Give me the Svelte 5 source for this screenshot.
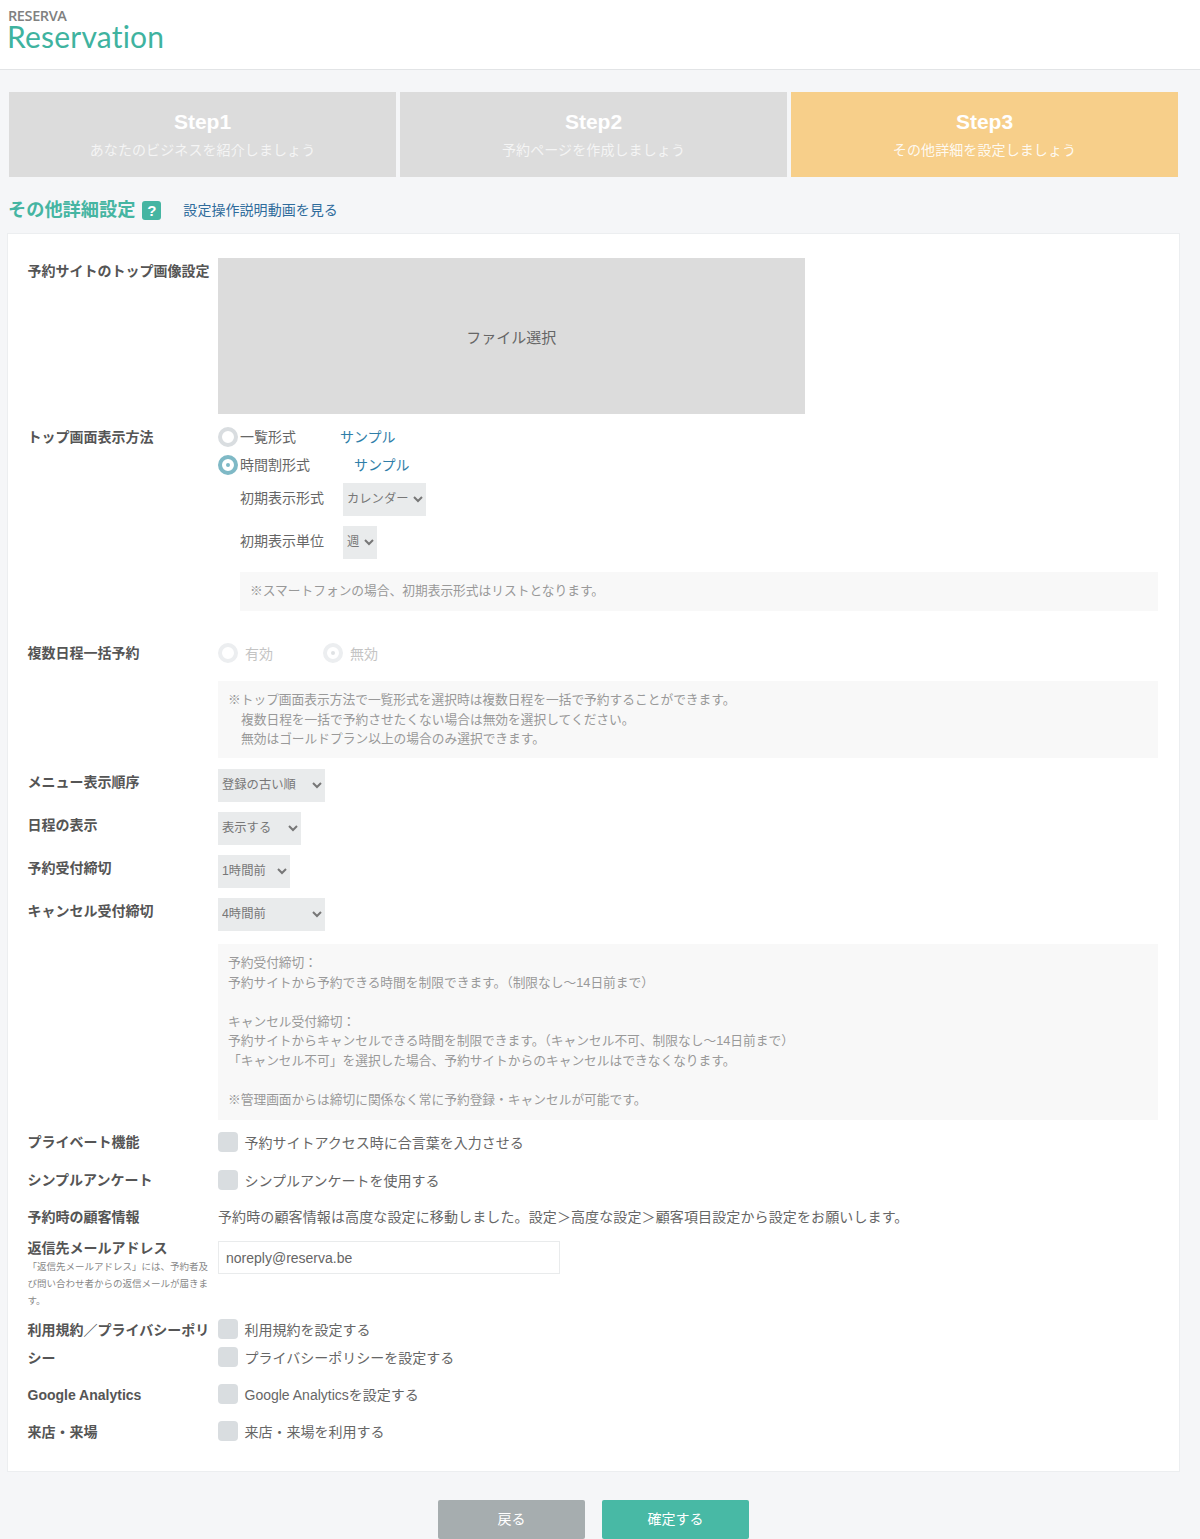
<script>
  const steps = [
    { name: 'Step1', sub: 'あなたのビジネスを紹介しましょう', on: false },
    { name: 'Step2', sub: '予約ページを作成しましょう', on: false },
    { name: 'Step3', sub: 'その他詳細を設定しましょう', on: true }
  ];
  const selects = [
    { label: 'メニュー表示順序', value: '登録の古い順', cls: 'w107' },
    { label: '日程の表示', value: '表示する', cls: 'w82' },
    { label: '予約受付締切', value: '1時間前', cls: 'w72' },
    { label: 'キャンセル受付締切', value: '4時間前', cls: 'w107' }
  ];
</script>

<header class="head">
  <div class="brand">RESERVA</div>
  <div class="logo">Reservation</div>
</header>

<main class="page">
  <div class="steps">
    {#each steps as s}
      <div class="step" class:on={s.on}>
        <div class="step-name">{s.name}</div>
        <div class="step-sub">{s.sub}</div>
      </div>
    {/each}
  </div>

  <div class="title-row">
    <h1>その他詳細設定</h1>
    <span class="help">?</span>
    <a class="video">設定操作説明動画を見る</a>
  </div>

  <section class="card">
    <div class="row r-image">
      <div class="label">予約サイトのトップ画像設定</div>
      <div class="file">ファイル選択</div>
    </div>

    <div class="row r-display">
      <div class="label">トップ画面表示方法</div>
      <div class="body">
        <div class="opt o1"><span class="radio"></span><span class="opt-t w70">一覧形式</span><a class="sample">サンプル</a></div>
        <div class="opt o2"><span class="radio checked"></span><span class="opt-t w84">時間割形式</span><a class="sample">サンプル</a></div>
        <div class="sub-row s1"><span class="sub-l">初期表示形式</span><select class="w83"><option>カレンダー</option></select></div>
        <div class="sub-row s2"><span class="sub-l">初期表示単位</span><select class="w34"><option>週</option></select></div>
        <div class="note n-sm">※スマートフォンの場合、初期表示形式はリストとなります。</div>
      </div>
    </div>

    <div class="row r-multi">
      <div class="label">複数日程一括予約</div>
      <div class="body">
        <div class="dis">
          <span class="radio faded"></span><span class="dis-t">有効</span>
          <span class="radio faded checked-f"></span><span class="dis-t">無効</span>
        </div>
        <div class="note n-md">
          <div class="hang">※トップ画面表示方法で一覧形式を選択時は複数日程を一括で予約することができます。</div>
          <div class="ind">複数日程を一括で予約させたくない場合は無効を選択してください。</div>
          <div class="ind">無効はゴールドプラン以上の場合のみ選択できます。</div>
        </div>
      </div>
    </div>

    {#each selects as s}
      <div class="row r-sel">
        <div class="label">{s.label}</div>
        <select class={s.cls}><option>{s.value}</option></select>
      </div>
    {/each}

    <div class="row r-note">
      <div class="label"></div>
      <div class="note n-lg">
        <div>予約受付締切：</div>
        <div>予約サイトから予約できる時間を制限できます。（制限なし～14日前まで）</div>
        <div class="blank"></div>
        <div>キャンセル受付締切：</div>
        <div>予約サイトからキャンセルできる時間を制限できます。（キャンセル不可、制限なし～14日前まで）</div>
        <div>「キャンセル不可」を選択した場合、予約サイトからのキャンセルはできなくなります。</div>
        <div class="blank"></div>
        <div>※管理画面からは締切に関係なく常に予約登録・キャンセルが可能です。</div>
      </div>
    </div>

    <div class="row r-check first">
      <div class="label">プライベート機能</div>
      <label class="check"><span class="box"></span>予約サイトアクセス時に合言葉を入力させる</label>
    </div>
    <div class="row r-check second">
      <div class="label">シンプルアンケート</div>
      <label class="check"><span class="box"></span>シンプルアンケートを使用する</label>
    </div>
    <div class="row r-info">
      <div class="label">予約時の顧客情報</div>
      <div class="info">予約時の顧客情報は高度な設定に移動しました。設定＞高度な設定＞顧客項目設定から設定をお願いします。</div>
    </div>
    <div class="row r-mail">
      <div class="label">
        <div class="mail-l">返信先メールアドレス</div>
        <small>「返信先メールアドレス」には、予約者及び問い合わせ者からの返信メールが届きます。</small>
      </div>
      <input class="mail" value="noreply@reserva.be" />
    </div>
    <div class="row r-terms">
      <div class="label terms-l">利用規約／プライバシーポリシー</div>
      <div class="terms">
        <label class="check"><span class="box"></span>利用規約を設定する</label>
        <label class="check"><span class="box"></span>プライバシーポリシーを設定する</label>
      </div>
    </div>
    <div class="row r-check">
      <div class="label low">Google Analytics</div>
      <label class="check"><span class="box"></span>Google Analyticsを設定する</label>
    </div>
    <div class="row r-check">
      <div class="label low">来店・来場</div>
      <label class="check"><span class="box"></span>来店・来場を利用する</label>
    </div>
  </section>

  <div class="actions">
    <button class="btn back">戻る</button>
    <button class="btn ok">確定する</button>
  </div>
</main>

<style>
  :global(body) {
    margin: 0;
    background: #f5f6f8;
    font-family: "Liberation Sans", "Noto Sans CJK JP", sans-serif;
    color: #666;
    font-size: 14px;
  }
  .head {
    height: 69px;
    background: #fff;
    border-bottom: 1px solid #e2e4e6;
    padding-left: 8px;
    box-sizing: content-box;
    overflow: hidden;
  }
  .brand {
    font: 600 14.5px/14px "Open Sans", sans-serif;
    color: #808080;
    padding-top: 9px;
    letter-spacing: -0.4px;
  }
  .logo {
    font: 400 30px/26px "Lato", sans-serif;
    color: #3fb39f;
    letter-spacing: 0.2px;
    margin-left: -1px;
  }
  .page { padding: 22px 20px 0 7px; }
  .steps { display: flex; gap: 4px; padding: 0 2px; }
  .step {
    width: 387px;
    height: 85px;
    background: #dcdcdc;
    color: #fff;
    text-align: center;
    box-sizing: border-box;
    padding-top: 16px;
  }
  .step.on { background: #f7cf8a; }
  .step-name { font: 700 21px/28px "Liberation Sans", sans-serif; }
  .step-sub { font-size: 14px; line-height: 20px; margin-top: 4px; letter-spacing: 0.1px; color: rgba(255,255,255,.72); }
  .step.on .step-sub { color: rgba(255,255,255,.9); }

  .title-row { display: flex; align-items: center; height: 56px; padding-top: 10px; box-sizing: border-box; }
  h1 { margin: 0 0 0 1px; font-size: 18.2px; font-weight: 700; color: #45b5a2; line-height: 24px; }
  .help {
    width: 19px; height: 19px; margin-left: 7px;
    background: #45b5a2; color: #fff; border-radius: 3px;
    font: 700 15px/19px "Liberation Sans", sans-serif; text-align: center;
  }
  .video { margin-left: 22px; color: #2f6c9c; font-size: 14px; letter-spacing: 0.05px; margin-top: -2px; }

  .card {
    background: #fff;
    border: 1px solid #eceef0;
    width: 1173px;
    height: 1239px;
    box-sizing: border-box;
    padding: 24px 21px 0 19.5px;
  }
  .row { display: flex; }
  .label {
    width: 190.5px;
    flex: none;
    font-weight: 700;
    color: #555;
    line-height: 20px;
  }
  .r-image .label { padding-top: 3px; }
  .file {
    width: 586.5px; height: 156px;
    background: #dcdcdc;
    color: #666;
    font-size: 15px;
    display: flex; align-items: center; justify-content: center;
    box-sizing: border-box;
  }
  .r-display { margin-top: 13px; }
  .body { width: 940px; flex: none; }
  .opt { display: flex; align-items: center; height: 20px; line-height: 20px; }
  .o2 { margin-top: 8px; }
  .opt-t { display: block; margin-left: 2px; color: #666; }
  .w70 { width: 100px; }
  .w84 { width: 114px; }
  .sample { color: #2f7ea8; font-size: 14px; }
  .radio {
    width: 20px; height: 20px; flex: none; box-sizing: border-box;
    border-radius: 50%;
    border: 4px solid #d9dde0;
    background: #fff;
    position: relative;
    display: block;
  }
  .radio.checked { border-color: #7fb9c6; }
  .radio.checked::after, .radio.checked-f::after {
    content: ""; position: absolute; left: 4px; top: 4px; width: 4px; height: 4px;
    border-radius: 50%; background: #7fb9c6;
  }
  .radio.faded { border-color: #eceef0; }
  .radio.checked-f::after { background: #dfe2e4; }
  .sub-row { display: flex; align-items: center; padding-left: 22px; }
  .sub-l { width: 103px; color: #666; padding-bottom: 6px; }
  .s1 { margin-top: 8px; }
  .s2 { margin-top: 10px; }

  select {
    appearance: auto;
    height: 33px;
    border: none;
    border-radius: 0;
    background-color: #e9ebec;
    color: #777;
    font: 400 12.3px "Liberation Sans", "Noto Sans CJK JP", sans-serif;
    padding: 0 0 2px;
    display: block;
    flex: none;
  }
  .w83 { width: 83px; }
  .w34 { width: 34px; }
  .w107 { width: 107px; }
  .w82 { width: 83px; }
  .w72 { width: 72px; }

  .note {
    background: #f8f8f8;
    color: #999;
    font-size: 12.72px;
    line-height: 19.5px;
    box-sizing: border-box;
  }
  .n-sm { margin: 13px 0 0 22px; height: 39px; padding: 9px 10px 0; }
  .r-multi { margin-top: 32px; }
  .dis { display: flex; align-items: center; height: 20px; }
  .dis-t { color: #c4c4c4; margin-left: 7px; width: 78px; }
  .n-md { margin-top: 18px; height: 77px; padding: 9px 10px 0; }
  .ind { padding-left: 13px; }
  .r-sel { margin-top: 10px; height: 33px; }
  .r-multi + .r-sel { margin-top: 11px; }
  .r-sel .label { line-height: 26px; }
  .r-note { margin-top: 13px; }
  .n-lg { width: 940px; height: 176px; padding: 9px 10px 0; }
  .blank { height: 19.5px; }

  .r-check { margin-top: 17px; height: 20px; }
  .r-check.first { margin-top: 12px; }
  .r-check.second { margin-top: 18px; }
  .check { display: flex; align-items: center; height: 20px; color: #666; }
  .box {
    width: 20px; height: 20px; margin-right: 6.5px; flex: none;
    background: #d9dde0; border-radius: 4px;
  }
  .r-info { margin-top: 17px; height: 20px; }
  .info { color: #666; line-height: 20px; letter-spacing: 0.12px; }
  .r-mail { margin-top: 14px; height: 70px; }
  .mail-l { line-height: 16px; margin-top: -1px; }
  small {
    display: block;
    width: 187px;
    font-size: 9.5px;
    font-weight: 400;
    color: #888;
    line-height: 17px;
    margin-top: 2px;
  }
  .mail {
    width: 342px; height: 33px; box-sizing: border-box;
    border: 1px solid #e9ebec; background: #fff; color: #666;
    font: 400 14px "Liberation Sans", sans-serif;
    padding: 0 7px; margin: 0; outline: none;
  }
  .r-terms { margin-top: 8px; height: 48px; }
  .terms-l { line-height: 28px; margin-top: -3px; }
  .terms { display: flex; flex-direction: column; gap: 8px; }
  .low { padding-top: 1px; }

  .actions { display: flex; justify-content: center; gap: 17px; margin-top: 28px; }
  .btn {
    width: 147px; height: 39px; border: none; border-radius: 2px;
    color: #fff; font: 400 14px "Liberation Sans", "Noto Sans CJK JP", sans-serif;
    padding: 0 0 3px;
  }
  .back { background: #a6adaf; }
  .ok { background: #48b9a5; }
</style>
